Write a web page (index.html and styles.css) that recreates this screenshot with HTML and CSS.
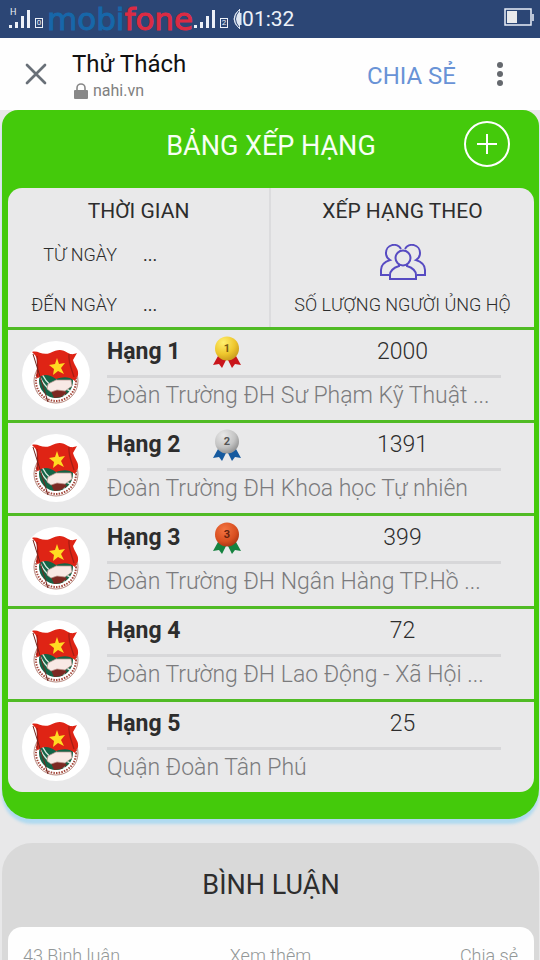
FILE: index.html
```html
<!DOCTYPE html>
<html lang="vi">
<head>
<meta charset="utf-8">
<meta name="viewport" content="width=device-width, initial-scale=1">
<title>Thử Thách</title>
<link rel="stylesheet" href="styles.css">
</head>
<body>
<svg class="sprites" aria-hidden="true">
  <defs>
    <symbol id="signal" viewBox="0 0 23 20">
      <path d="M1 16h3v3H1zM7 13h3v6H7zM13 7h3v12h-3zM19 1h3v18h-3z" fill="#edf1f8"/>
    </symbol>
    <symbol id="badge" viewBox="0 0 68 68">
      <circle cx="34" cy="34" r="34" fill="#fff"/>
      <circle cx="34" cy="40" r="22" fill="#fff" stroke="#b98a80" stroke-width="1"/>
      <circle cx="34" cy="40" r="20" fill="none" stroke="#a4483c" stroke-width="2" stroke-dasharray="1.5 1.2"/>
      <circle cx="34" cy="40" r="17" fill="#146446"/>
      <path d="M18 36q8 17 25 18M20 33q7 14 20 17M48 50q-8-4-14-11" fill="none" stroke="#d8e9df" stroke-width="1.4"/>
      <path d="M32 57l-3-7 9-5 7 7-6 4z" fill="#7c2923"/>
      <path d="M26 43l8-4 15 0 1 6-7 5-8-1-6 2-4-3z" fill="#f8e9e5" stroke="#b99189" stroke-width=".7"/>
      <path d="M10 11c6-2 10 4 18 1 8-4 12-4 18 0 4 2 6 1 9 0l-4 7c2 7 6 9 5 15l-3 6c-7-5-12-4-19-2-7-5-13-5-18-1-3 0-1-5 0-9 0-7 0-12-6-17z" fill="#df2415"/>
      <path d="M15 15c1 7 1 14 0 21M47 13c-1 8 3 16 5 23" fill="none" stroke="#a71d14" stroke-width="1.3"/>
      <path d="M35 17l2 6 6-1-4 5 3 6-6-3-5 4 1-6-5-4 6-1z" fill="#ffdb22"/>
      <path d="M11 13l15 48" stroke="#72251d" stroke-width="1"/>
    </symbol>
    <radialGradient id="gold" cx="35%" cy="25%" r="75%"><stop stop-color="#fff06e"/><stop offset=".65" stop-color="#eec62c"/><stop offset="1" stop-color="#cda020"/></radialGradient>
    <radialGradient id="silver" cx="35%" cy="25%" r="75%"><stop stop-color="#e8e8e8"/><stop offset=".65" stop-color="#c4c4c4"/><stop offset="1" stop-color="#969696"/></radialGradient>
    <radialGradient id="bronze" cx="40%" cy="30%" r="75%"><stop stop-color="#f37542"/><stop offset=".65" stop-color="#d94f20"/><stop offset="1" stop-color="#a63313"/></radialGradient>
  </defs>
</svg>

<div class="app">
  <div class="status">
    <span class="network">H</span>
    <svg class="signal" aria-hidden="true"><use href="#signal"/></svg>
    <span class="sim">0</span>
    <span class="carrier">mobi<span class="carrier-red">fone</span></span>
    <svg class="signal" aria-hidden="true"><use href="#signal"/></svg>
    <span class="sim">2</span>
    <svg class="moon" viewBox="0 0 10 22" aria-hidden="true"><path d="M8 1Q-4 11 8 21M9 5q-7 6 0 12z" fill="#dfe7f2" stroke="#dfe7f2" stroke-width="1"/><path d="M7 3q-7 8 0 16" fill="none" stroke="#2c4675"/></svg>
    <time class="clock">01:32</time>
    <svg class="battery" viewBox="0 0 30 18" aria-hidden="true"><path d="M1 1h26v16H1zM29 6v7" fill="none" stroke="#e9eef7" stroke-width="1.5"/><path d="M3 3h10v12H3z" fill="#e9eaec"/></svg>
  </div>

  <header class="toolbar">
    <button class="icon-button" aria-label="Đóng"><svg class="close" viewBox="0 0 24 24"><path d="M3 3l18 18M21 3L3 21" stroke="#697078" stroke-width="2.7" stroke-linecap="round"/></svg></button>
    <div class="page-info">
      <h1 class="page-title">Thử Thách</h1>
      <div class="site"><svg class="lock" viewBox="0 0 14 16" aria-hidden="true"><rect y="7" width="14" height="9" rx="1" fill="#888"/><path d="M3 7V5a4 4 0 0 1 8 0v2" fill="none" stroke="#888" stroke-width="1.6"/></svg>nahi.vn</div>
    </div>
    <button class="share">CHIA SẺ</button>
    <button class="icon-button menu-button" aria-label="Tùy chọn"><svg class="more" viewBox="0 0 6 26"><g fill="#65696e"><circle cx="3" cy="4" r="3"/><circle cx="3" cy="13" r="3"/><circle cx="3" cy="22" r="3"/></g></svg></button>
  </header>

  <main class="content">
    <section class="board">
      <div class="board-head">
        <h2 class="board-title">BẢNG XẾP HẠNG</h2>
        <button class="add" aria-label="Thêm"><svg class="add-icon" viewBox="0 0 46 46"><circle cx="23" cy="23" r="22" fill="none" stroke="#fff" stroke-width="2"/><path d="M13 23h20M23 13v20" stroke="#fff" stroke-width="2"/></svg></button>
      </div>
      <div class="panel">
        <div class="filters">
          <div class="filter time-filter">
            <h3 class="filter-title">THỜI GIAN</h3>
            <dl class="dates">
              <dt>TỪ NGÀY</dt><dd>...</dd>
              <dt>ĐẾN NGÀY</dt><dd>...</dd>
            </dl>
          </div>
          <div class="filter">
            <h3 class="filter-title">XẾP HẠNG THEO</h3>
            <svg class="people" viewBox="0 0 46 36" aria-hidden="true">
              <g fill="none" stroke="#574bc2" stroke-width="2">
                <path d="M9 31H1v-5q0-7 9-10a8 8 0 0 1-4-7a8 8 0 0 1 15-4M37 31h8v-5q0-7-9-10a8 8 0 0 0 4-7a8 8 0 0 0-15-4"/>
                <circle cx="23" cy="14" r="7.5"/>
                <path d="M19 20v2q-9 3-9 9v4h26v-4q0-6-9-9v-2"/>
              </g>
            </svg>
            <p class="criterion">SỐ LƯỢNG NGƯỜI ỦNG HỘ</p>
          </div>
        </div>
        <ol class="ranking">
          <li class="rank">
            <svg class="avatar" aria-hidden="true"><use href="#badge"/></svg>
            <div class="rank-body">
              <div class="rank-top"><strong class="rank-name">Hạng 1</strong><svg class="medal" viewBox="0 0 28 32" role="img" aria-label="Huy chương vàng"><path d="M5 20L0 29l6-1 3 4 6-12zM23 20l5 9-6-1-3 4-6-12z" fill="#c9151b"/><circle cx="14" cy="12.5" r="12" fill="url(#gold)"/><text class="medal-number" x="14" y="16" fill="#795b12">1</text></svg><span class="score">2000</span></div>
              <p class="team">Đoàn Trường ĐH Sư Phạm Kỹ Thuật ...</p>
            </div>
          </li>
          <li class="rank">
            <svg class="avatar" aria-hidden="true"><use href="#badge"/></svg>
            <div class="rank-body">
              <div class="rank-top"><strong class="rank-name">Hạng 2</strong><svg class="medal" viewBox="0 0 28 32" role="img" aria-label="Huy chương bạc"><path d="M5 20L0 29l6-1 3 4 6-12zM23 20l5 9-6-1-3 4-6-12z" fill="#165a9f"/><circle cx="14" cy="12.5" r="12" fill="url(#silver)"/><text class="medal-number" x="14" y="16" fill="#555">2</text></svg><span class="score">1391</span></div>
              <p class="team">Đoàn Trường ĐH Khoa học Tự nhiên</p>
            </div>
          </li>
          <li class="rank">
            <svg class="avatar" aria-hidden="true"><use href="#badge"/></svg>
            <div class="rank-body">
              <div class="rank-top"><strong class="rank-name">Hạng 3</strong><svg class="medal" viewBox="0 0 28 32" role="img" aria-label="Huy chương đồng"><path d="M5 20L0 29l6-1 3 4 6-12zM23 20l5 9-6-1-3 4-6-12z" fill="#158340"/><circle cx="14" cy="12.5" r="12" fill="url(#bronze)"/><text class="medal-number" x="14" y="16" fill="#64230f">3</text></svg><span class="score">399</span></div>
              <p class="team">Đoàn Trường ĐH Ngân Hàng TP.Hồ ...</p>
            </div>
          </li>
          <li class="rank">
            <svg class="avatar" aria-hidden="true"><use href="#badge"/></svg>
            <div class="rank-body">
              <div class="rank-top"><strong class="rank-name">Hạng 4</strong><span class="score">72</span></div>
              <p class="team">Đoàn Trường ĐH Lao Động - Xã Hội ...</p>
            </div>
          </li>
          <li class="rank">
            <svg class="avatar" aria-hidden="true"><use href="#badge"/></svg>
            <div class="rank-body">
              <div class="rank-top"><strong class="rank-name">Hạng 5</strong><span class="score">25</span></div>
              <p class="team">Quận Đoàn Tân Phú</p>
            </div>
          </li>
        </ol>
      </div>
    </section>

    <section class="comments">
      <h2 class="comments-title">BÌNH LUẬN</h2>
      <div class="comments-bar">
        <span>43 Bình luận</span>
        <button class="comment-action">Xem thêm</button>
        <button class="comment-action comment-share">Chia sẻ</button>
      </div>
    </section>
  </main>
</div>
</body>
</html>
```
FILE: styles.css
```css
* { box-sizing: border-box; }

body {
  margin: 0;
  background: #e8e8e9;
  color: #2d2d2d;
  font-family: Roboto, "Noto Sans", sans-serif;
}

h1, h2, h3, p, dl, dd, ol { margin: 0; padding: 0; font-weight: 400; }

button {
  padding: 0;
  border: 0;
  background: none;
  color: inherit;
  font: inherit;
}

svg { display: block; flex: none; }

.sprites { position: absolute; width: 0; height: 0; }

.app {
  display: flex;
  flex-direction: column;
  height: 100vh;
  overflow: hidden;
}

.status {
  position: relative;
  display: flex;
  align-items: center;
  flex: none;
  height: 38px;
  padding: 0 6px 0 8px;
  background: #2c4675;
  color: #edf1f8;
}

.network { position: absolute; top: 6px; left: 10px; font-size: 9px; line-height: 12px; }
.signal { width: 23px; height: 20px; }

.sim {
  width: 8px;
  margin: 8px 4px 0;
  border: 1px solid #edf1f8;
  font-size: 8px;
  line-height: 8px;
  text-align: center;
}

.carrier {
  color: #1767a9;
  font-family: "DejaVu Sans", sans-serif;
  font-size: 31px;
  line-height: 38px;
  -webkit-text-stroke: 1px currentColor;
}

.carrier-red { color: #dc2b43; }
.moon { width: 10px; height: 22px; }
.clock { font-size: 21px; line-height: 38px; }
.battery { width: 30px; height: 18px; margin: 0 0 4px auto; }

.toolbar {
  display: flex;
  align-items: center;
  flex: none;
  height: 72px;
  background: #fefefe;
}

.icon-button { display: grid; place-items: center; width: 72px; height: 72px; }
.close { width: 24px; height: 24px; }
.more { width: 6px; height: 26px; }
.page-info { flex: 1; padding-top: 3px; }
.page-title { color: #111; font-size: 24px; line-height: 30px; }

.site {
  display: flex;
  align-items: center;
  gap: 5px;
  padding-left: 2px;
  color: #808080;
  font-size: 16px;
  line-height: 24px;
}

.lock { width: 14px; height: 16px; }
.share { padding-top: 3px; color: #6993d6; font-size: 24px; line-height: 32px; }
.menu-button { width: 84px; padding-left: 4px; }

.content { flex: 1; min-height: 0; padding: 0 1px 0 2px; overflow: hidden; }

.board {
  padding: 0 5px 27px 6px;
  border-radius: 16px 16px 30px 30px;
  background: #44ca0b;
  box-shadow: 0 5px 3px #b0daf0;
}

.board-head {
  position: relative;
  display: flex;
  align-items: center;
  justify-content: center;
  height: 78px;
  padding-bottom: 6px;
}

.board-title { color: #f7fff3; font-size: 27px; line-height: 36px; }
.add { position: absolute; top: 11px; right: 24px; }
.add-icon { width: 46px; height: 46px; }

.panel { overflow: hidden; border-radius: 14px; background: #e9e9ea; }

.filters { display: grid; grid-template-columns: 1fr 1fr; height: 139px; text-align: center; }
.filter { padding-top: 8px; }
.time-filter { border-right: 2px solid #dcdcde; }
.filter-title { font-size: 21px; line-height: 30px; }

.dates {
  display: grid;
  grid-template-columns: 109px 1fr;
  gap: 20px 26px;
  padding-top: 14px;
  font-size: 18px;
  font-weight: 300;
  line-height: 30px;
  text-align: right;
}

.dates dd { text-align: left; }
.people { width: 46px; height: 36px; margin: 18px auto 10px; }
.criterion { font-size: 18px; font-weight: 300; line-height: 30px; }

.ranking { list-style: none; }

.rank {
  display: flex;
  align-items: center;
  gap: 17px;
  height: 93px;
  padding: 0 33px 0 14px;
  border-top: 3px solid #50bb25;
}

.avatar { width: 68px; height: 68px; }
.rank-body { flex: 1; min-width: 0; height: 90px; }

.rank-top {
  display: grid;
  grid-template-columns: 106px 1fr 50%;
  align-items: center;
  height: 48px;
  padding-bottom: 2px;
  border-bottom: 3px solid #d7d7d9;
}

.rank-name { font-size: 23px; font-weight: 700; line-height: 42px; }
.medal { width: 28px; height: 32px; }
.medal-number { font-size: 11px; font-weight: 700; text-anchor: middle; }
.score { grid-column: 3; font-size: 23px; font-weight: 300; line-height: 42px; text-align: center; }
.team { color: #7b7b7d; font-size: 23px; font-weight: 300; line-height: 36px; white-space: nowrap; }

.comments {
  margin-top: 24px;
  padding: 0 5px 8px 6px;
  border-radius: 30px;
  background: #d9d9d9;
}

.comments-title { font-size: 27px; line-height: 84px; text-align: center; }

.comments-bar {
  display: grid;
  grid-template-columns: 1fr auto 1fr;
  height: 60px;
  padding: 16px 16px 0 15px;
  border-radius: 14px;
  background: #fefefe;
  color: #929797;
  font-size: 18px;
  font-weight: 300;
  line-height: 26px;
}

.comment-action { height: 26px; }
.comment-share { justify-self: end; }
```
